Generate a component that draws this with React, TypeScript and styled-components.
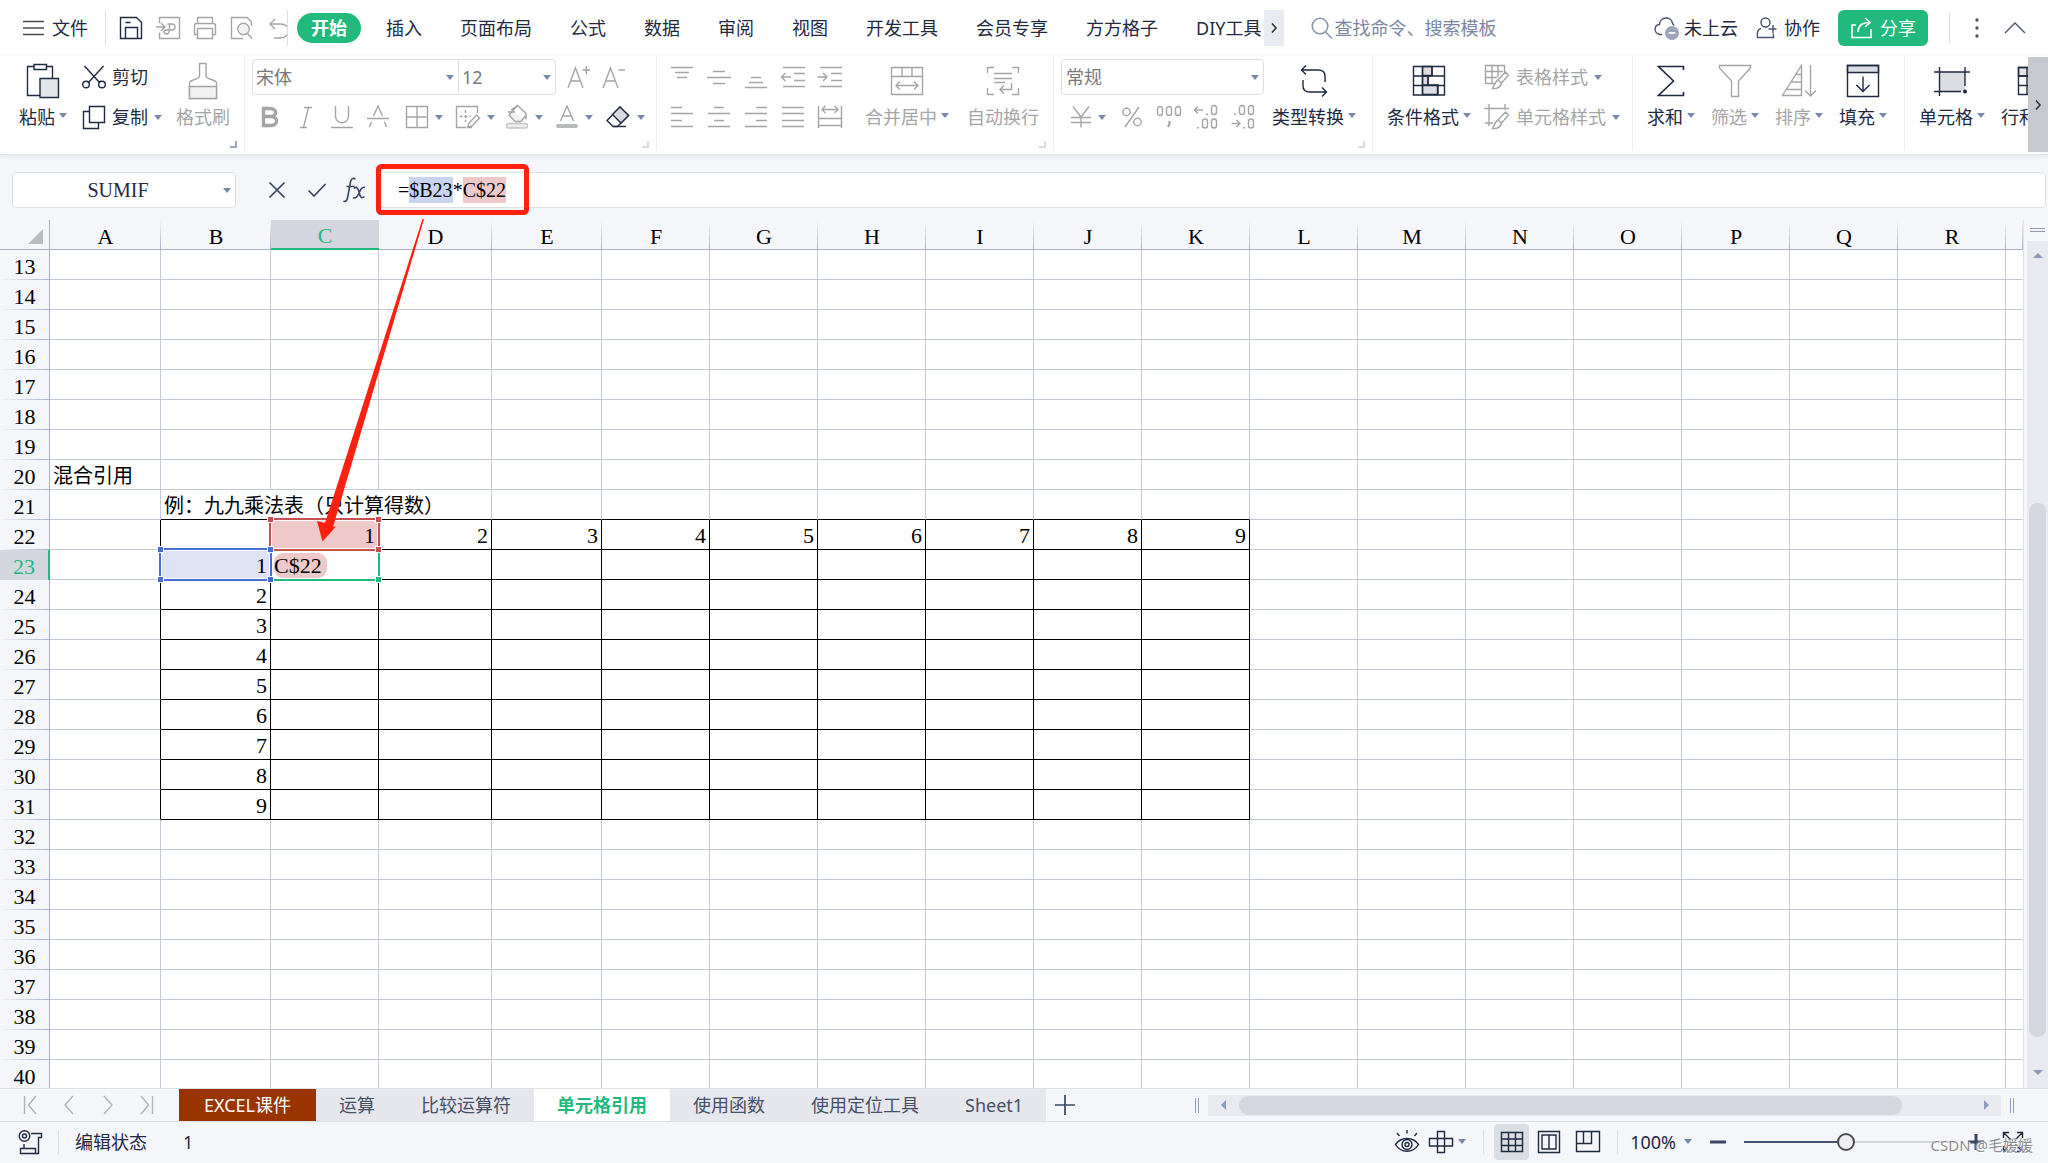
import React from "react";
import styled, { createGlobalStyle, css } from "styled-components";

const c = {
  ink: "#1f2940",
  dim: "#a5a5a7",
  caret: "#7888a8",
  line: "#dcdfe4",
  green: "#21ba7c",
  grid: "#c4c9da",
  head: "#a9b1c8",
  bg: "#f5f6f9",
  strip: "#e6e7ed",
  red: "#ff2010",
};

const ui = `"Noto Sans", "Noto Sans CJK SC", sans-serif`;
const song = `"Liberation Serif", "Noto Sans CJK SC", serif`;

const GlobalStyle = createGlobalStyle`
  * { box-sizing: border-box; }
  body { margin: 0; background: ${c.bg}; }
  button, input, select {
    font: inherit; color: inherit; margin: 0; padding: 0;
    border: 0; background: none; outline: none;
  }
  svg { display: block; flex: none; }
`;

/* ---------- icons ---------- */

const Svg = styled.svg<{ $dim?: boolean }>`
  fill: none;
  stroke: ${(p) => (p.$dim ? c.dim : c.ink)};
  stroke-width: 1.4;
`;

type IconDef = { w: number; h: number; d: React.ReactNode };

const icons: Record<string, IconDef> = {
  menu: { w: 22, h: 22, d: <path d="M1 4.500H22M1 11H22M1 17.500H22" stroke="#4a4a50" /> },
  save: { w: 24, h: 24, d: <path d="M1.500 1.500H17.500L22.500 6.500V22.500H1.500ZM6.500 22V11.500H18.500V22M6.500 6.500H11.500" /> },
  exportPdf: { w: 26, h: 24, d: <path d="M4.500 7V1.500H24.500V22.500H4.500V16.500M1 11H9.500M6 7L10 11L6 15M12.500 8H17C21 8 21 14 17 14H11.500C7.500 14 8.500 18.500 12 18C14.500 17.500 14.500 15 14.500 8" /> },
  print: { w: 24, h: 24, d: <><path d="M4.500 7.500V1.500H19.500V7.500M4.500 18.500H1.500V9.500C1.500 8 2.500 7.500 4 7.500H20C21.500 7.500 22.500 8 22.500 9.500V18.500H19.500" /><path d="M4.500 12.500H19.500V22.500H4.500Z" fill="#fff" /></> },
  preview: { w: 24, h: 24, d: <><path d="M13 22.500H1.500V1.500H17L21.500 6V10" /><circle cx="13.500" cy="13" r="5.800" fill="#f1f1f2" /><path d="M17.500 17.500L22 22.500" /></> },
  undo: { w: 22, h: 24, d: <path d="M7 3L2 8L7 13M2.500 8H12C18 8 20.500 11 20.500 14.500C20.500 19 17 22 12 22H6" /> },
  search: { w: 24, h: 24, d: <g stroke="#8a94ad" strokeWidth="1.600"><circle cx="10" cy="10" r="7.800" /><path d="M15.500 16L22 22.500" /></g> },
  cloud: { w: 26, h: 26, d: <><path d="M8 19.500H6C-1 18 0 10 5.500 9.500C6 1 17.500 1 18.500 8.500L20 10.500" stroke="#45526d" /><circle cx="18" cy="18" r="7" fill="#9aa5bb" stroke="none" /><path d="M14.500 18H21.500" stroke="#fff" strokeWidth="1.600" /></> },
  people: { w: 24, h: 24, d: <g stroke="#45526d"><circle cx="9.500" cy="6.500" r="4.500" /><path d="M5 12.500C1 13 1 17 1.500 21.500H17.500C17.700 19.500 17.500 18.500 17 17.500M12.500 13H20.500M17 9V17" /></g> },
  share: { w: 24, h: 24, d: <path d="M6 9H2V21.500H21V13M8 16C8 10 11 6.500 19.500 6.500M15 2L20 6.500L15 11" stroke="#fff" strokeWidth="1.600" /> },
  dots: { w: 6, h: 24, d: <g fill="#4a5568" stroke="none"><circle cx="3" cy="4" r="1.700" /><circle cx="3" cy="12" r="1.700" /><circle cx="3" cy="20" r="1.700" /></g> },
  up: { w: 22, h: 14, d: <path d="M1 12L11 2L21 12" stroke="#4a5568" /> },
  next: { w: 8, h: 12, d: <path d="M2 1.500L6 6L2 10.500" stroke="#333" strokeWidth="1.600" /> },

  paste: { w: 34, h: 36, d: <><path d="M8 3.500H1.500V32.500H14M20.500 3.500H26.500V15.500" /><path d="M8 1.500H20.500V6.500H8Z" /><path d="M14 15.500H32.500V34.500H14Z" fill="#e3e4e8" /></> },
  cut: { w: 24, h: 24, d: <><path d="M2.500 1L17.500 17.500M21.500 1L6.500 17.500" /><circle cx="4" cy="19.500" r="3.300" /><circle cx="20" cy="19.500" r="3.300" /></> },
  copy: { w: 24, h: 26, d: <path d="M7.500 2.500H22.500V18.500H7.500ZM7 7.500H1.500V24.500H16.500V19" /> },
  painter: { w: 30, h: 38, d: <><path d="M11.500 1.500H18V14C18 18 28.500 17 28.500 21V36.500H1.500V21C1.500 17 11.500 18 11.500 14Z" /><path d="M1.500 24.500H28.500V36.500H1.500Z" fill="#f1f1f2" /></> },
  fontUp: { w: 24, h: 24, d: <path d="M1 23L8.500 3L16 23M4 16H13M15.500 5H23M19.300 1V9" /> },
  fontDown: { w: 24, h: 24, d: <path d="M1 23L8.500 3L16 23M4 16H13M16.500 5H23" /> },
  bold: { w: 20, h: 22, d: <path d="M3.500 2.500H10C17.500 2.500 17.500 10.500 10 10.500H3.500ZM3.500 10.500H11C18.500 10.500 18.500 19.500 11 19.500H3.500Z" strokeWidth="3.400" /> },
  italic: { w: 14, h: 24, d: <path d="M5 2.500H13M1 22.500H8M9.500 2.500L4.500 22.500" /> },
  underline: { w: 24, h: 24, d: <path d="M5.500 1V11C5.500 20 18.500 20 18.500 11V1M1 22.500H23" /> },
  strike: { w: 24, h: 24, d: <path d="M7.500 11L12 1L16.500 11M1 13.500H23M5.500 17L3.500 22M18.500 17L20.500 22" /> },
  borders: { w: 24, h: 24, d: <path d="M1.500 1.500H22.500V22.500H1.500ZM12 1.500V22.500M1.500 12H22.500" /> },
  drawBorder: { w: 26, h: 24, d: <><path d="M11 22.500H1.500V1.500H22.500V8" /><path d="M10.500 5V17M4.500 11.500H16" strokeDasharray="3 2" /><path d="M12.500 22.500L14 18L21.500 10L24.500 13L17 21ZM12 22.500H17" /></> },
  fill: { w: 24, h: 26, d: <><path d="M6 6L12.500 1.500L21 9.500V15.500M3 8H10M12.500 1.500L4 11L10 17.500H16L21 11" fill="#f1f1f2" /><rect x="1.500" y="19.500" width="21" height="4.500" rx="2" fill="#ececee" stroke="#c5c5c7" /></> },
  fontColor: { w: 24, h: 24, d: <><path d="M5.500 16L12 1L18.500 16M7.500 11H16.500" /><rect x="1" y="19" width="22" height="4" rx="2" fill="#b7bab9" stroke="none" /></> },
  eraser: { w: 26, h: 24, d: <><path d="M15 2L23.500 10.500L12.500 21.500H8L2 15.500Z" /><path d="M15 2L23.500 10.500L16 18L7.500 9.500Z" fill="#d9dade" /><path d="M8 21.500H21" /></> },

  top: { w: 24, h: 24, d: <path d="M1 2.500H23M5 7.500H19M7 12.500H17" /> },
  middle: { w: 24, h: 24, d: <path d="M6 6.500H18M0 12.500H24M6 18.500H18" /> },
  bottom: { w: 24, h: 24, d: <path d="M7 12.500H17M5 17.500H19M1 22.500H23" /> },
  outdent: { w: 26, h: 24, d: <path d="M3 2.500H25M14 8.500H25M14 15.500H25M3 21.500H25M1.500 12H11M5.500 8L1.500 12L5.500 16" /> },
  indent: { w: 26, h: 24, d: <path d="M3 2.500H25M14 8.500H25M14 15.500H25M3 21.500H25M0.500 12H10M6 8L10 12L6 16" /> },
  left: { w: 24, h: 24, d: <path d="M1 2.500H12M1 8.500H23M1 15.500H12M1 21.500H23" /> },
  center: { w: 24, h: 24, d: <path d="M7 2.500H17M1 8.500H23M7 15.500H17M1 21.500H23" /> },
  right: { w: 24, h: 24, d: <path d="M12 2.500H23M1 8.500H23M12 15.500H23M1 21.500H23" /> },
  justify: { w: 24, h: 24, d: <path d="M1 2.500H23M1 8.500H23M1 15.500H23M1 21.500H23" /> },
  distribute: { w: 26, h: 24, d: <path d="M1.500 1V23M24.500 1V23M2 13.500H24M2 20.500H24M5 4.500H21M8.500 1L5 4.500L8.500 8M17.500 1L21 4.500L17.500 8" /> },
  merge: { w: 34, h: 30, d: <path d="M1.500 1.500H32.500V28.500H1.500ZM1.500 10.500H32.500M12 1.500V10.500M22 1.500V10.500M6 19.500H28M10 15.500L6 19.500L10 23.500M24 15.500L28 19.500L24 23.500" /> },
  wrap: { w: 34, h: 30, d: <path d="M8 1.500H1.500V7M26 1.500H32.500V7M8 28.500H1.500V22M26 28.500H32.500V22M8 7.500H26M8 12.500H26M8 16.500H19M25.500 17V23.500H14M18 19.500L14 23.500L18 27.500" /> },
  yen: { w: 22, h: 24, d: <path d="M3 1.500L11 12L19 1.500M11 12V22.500M1 12.500H21M1 17.500H21" /> },
  percent: { w: 22, h: 24, d: <><circle cx="5.500" cy="7" r="3.700" /><circle cx="16.500" cy="17" r="3.700" /><path d="M18 2L4 22" /></> },
  thousand: { w: 26, h: 24, d: <><rect x="1.500" y="1.500" width="5" height="9" rx="2.500" /><rect x="10.500" y="1.500" width="5" height="9" rx="2.500" /><rect x="19.500" y="1.500" width="5" height="9" rx="2.500" /><path d="M13.500 16V19L12 22" strokeWidth="2.200" /></> },
  decMore: { w: 26, h: 26, d: <><path d="M1.500 6H10M5 2.500L1.500 6L5 9.500" /><rect x="18.500" y="1.500" width="5" height="9" rx="2.500" /><rect x="9.500" y="15" width="5" height="9" rx="2.500" /><rect x="18.500" y="15" width="5" height="9" rx="2.500" /><path d="M14 9.500V11M5 23V24.500" strokeWidth="2" /></> },
  decLess: { w: 26, h: 26, d: <><path d="M1.500 19.500H10M6.500 16L10 19.500L6.500 23" /><rect x="9.500" y="1.500" width="5" height="9" rx="2.500" /><rect x="18.500" y="1.500" width="5" height="9" rx="2.500" /><rect x="18.500" y="15" width="5" height="9" rx="2.500" /><path d="M5 9.500V11M14 23V24.500" strokeWidth="2" /></> },
  convert: { w: 30, h: 34, d: <path d="M7 1.500L2.500 6L7 10.500M2.500 6H19C23.500 6 26 8 26 12V18M4 16V22C4 26 6.500 28 11 28H27.500M23 23.500L27.500 28L23 32.500" /> },
  condFormat: { w: 34, h: 32, d: <><path d="M10.500 1.500H20V10.500H10.500ZM10.500 11H16V20H10.500ZM10.500 20H26V29.500H10.500Z" fill="#dcdde2" /><path d="M1.500 1.500H32.500V30H1.500ZM1.500 11H32.500M1.500 20.500H32.500M10.500 1.500V30M20 1.500V11M16 11V20.500M25.500 20.500V30" /></> },
  tableStyle: { w: 26, h: 26, d: <path d="M10 19.500H1.500V1.500H20.500V9M1.500 7.500H19M1.500 13.500H13M8 1.500V19.500M14 1.500V13M14 16L21.500 8L24.500 11L17.500 19M14 16L17.500 19C16.500 23 13.500 25 8.500 24.500C10.500 22 10.500 17.500 14 16" /> },
  cellStyle: { w: 26, h: 26, d: <path d="M5 0V22M0 4.500H25M21 0V6M1 19H9M14 16L21.500 8L24.500 11L17.500 19M14 16L17.500 19C16.500 23 13.500 25 8.500 24.500C10.500 22 10.500 17.500 14 16" /> },
  sum: { w: 28, h: 32, d: <path d="M26.500 5V1.500H1.500L16.500 16L1.500 30.500H26.500V27" strokeWidth="1.600" /> },
  filter: { w: 34, h: 34, d: <path d="M1.500 1.500H32.500V4L20.500 17V32.500H13.500V17L1.500 4Z" /> },
  sort: { w: 36, h: 34, d: <path d="M20.500 1.500V31.500H1.500ZM15.500 10.500H20M10.500 18H20M6 25.500H20M29.500 1V31.500M24 26.500L29.500 32L35 26.500" /> },
  fillDown: { w: 34, h: 34, d: <><path d="M1.500 1.500H32.500V8.500H1.500Z" fill="#dcdde2" /><path d="M1.500 1.500H32.500V32.500H1.500ZM17 12.500V27M10.500 21L17 27.500L23.500 21" /></> },
  cells: { w: 36, h: 30, d: <><path d="M5.500 6H31V25H5.500Z" fill="#dcdde2" stroke="none" /><path d="M5.500 1V30M31 1V20M0 6H36M0 25.500H27" /><circle cx="31" cy="25.500" r="2" fill={c.ink} stroke="none" /></> },
  rows: { w: 34, h: 30, d: <><path d="M1.500 1.500H32.500V10H1.500Z" fill="#e3e4e8" /><path d="M1.500 1.500H32.500V28.500H1.500ZM1.500 10H32.500M1.500 19.500H32.500M10 1.500V28.500" /></> },

  cancel: { w: 18, h: 18, d: <path d="M1.500 1.500L16.500 16.500M16.500 1.500L1.500 16.500" stroke="#3a4763" strokeWidth="1.700" /> },
  accept: { w: 20, h: 16, d: <path d="M1.500 8.500L7 14L18.500 2" stroke="#3a4763" strokeWidth="1.700" /> },
  fx: { w: 24, h: 26, d: <path d="M12.500 2C9.500 0.500 8 2 7.500 5L4.500 21C4 24 2.500 25 0.500 24M3.500 9.500H11.500M11 11.500C13.500 9 15 11 16 15C17 20 18.500 22 21.500 19.500M22 10.500C19 9 17 14 16 16C14.500 19.500 12.500 22 10 20.500" stroke="#3a4763" strokeWidth="1.600" /> },
  first: { w: 14, h: 20, d: <path d="M1.500 1V19M13 1L5.500 10L13 19" stroke="#b0b2b8" /> },
  prev: { w: 12, h: 20, d: <path d="M10 1L2 10L10 19" stroke="#b0b2b8" /> },
  fwd: { w: 12, h: 20, d: <path d="M2 1L10 10L2 19" stroke="#b0b2b8" /> },
  last: { w: 14, h: 20, d: <path d="M12.500 1V19M1 1L8.500 10L1 19" stroke="#b0b2b8" /> },
  add: { w: 20, h: 20, d: <path d="M10 0V20M0 10H20" stroke="#3a4763" strokeWidth="1.700" /> },
  script: { w: 26, h: 26, d: <><circle cx="7.500" cy="7" r="5.300" /><circle cx="7.500" cy="7" r="2" /><path d="M14 4.500H24.500V8.500H21.500V24.500H18.500M7 15V19.500M3.500 19.500H18.500V24.500H3.500Z" /></> },
  eye: { w: 26, h: 26, d: <><path d="M1.500 15.500C7 7.500 19 7.500 24.500 15.500C19 24.500 7 24.500 1.500 15.500ZM13 1V4.500M3 4L5.500 7M23 4L20.500 7" /><circle cx="13" cy="15.500" r="5" /><circle cx="13" cy="15.500" r="2" /></> },
  cross: { w: 26, h: 24, d: <path d="M9.500 1.500H16.500V22.500H9.500ZM1.500 8.500H24.500V16H1.500Z" /> },
  viewGrid: { w: 24, h: 22, d: <path d="M1.500 1.500H22.500V20.500H1.500ZM1.500 8H22.500M1.500 14.500H22.500M8.500 1.500V20.500M15.500 1.500V20.500" /> },
  viewPage: { w: 24, h: 24, d: <path d="M1.500 1.500H22.500V22.500H1.500ZM5 5H19V19H5ZM12 5V19" /> },
  viewBreak: { w: 26, h: 24, d: <path d="M1.500 1.500H24.500V21.500H1.500ZM8.500 1.500V13.500H16.500V1.500M1.500 13.500H8.500M16.500 1.500V13.500" /> },
  minus: { w: 16, h: 4, d: <path d="M0 2H16" stroke="#3a4763" strokeWidth="3" /> },
  plus: { w: 16, h: 16, d: <path d="M0 8H16M8 0V16" stroke="#3a4763" strokeWidth="3" /> },
  expand: { w: 22, h: 22, d: <path d="M1.500 7V1.500H7M15 1.500H20.500V7M20.500 15V20.500H15M7 20.500H1.500V15M2 2L8.500 8.500M20 2L13.500 8.500M20 20L13.500 13.500M2 20L8.500 13.500" /> },
};

const Icon = ({ name, dim }: { name: string; dim?: boolean }) => {
  const i = icons[name];
  return (
    <Svg $dim={dim} width={i.w} height={i.h} viewBox={`0 0 ${i.w} ${i.h}`} aria-hidden="true">
      {i.d}
    </Svg>
  );
};

const Caret = styled.i`
  width: 0;
  height: 0;
  flex: none;
  border: 4px solid transparent;
  border-top: 5px solid ${c.caret};
  border-bottom: 0;
`;

/* ---------- shell ---------- */

const Shell = styled.div`
  display: flex;
  flex-direction: column;
  height: 100vh;
  overflow: hidden;
  background: ${c.bg};
  color: ${c.ink};
  font: 18px/26px ${ui};
  white-space: nowrap;
`;

const MenuBar = styled.header`
  display: flex;
  align-items: center;
  height: 56px;
  flex: none;
  padding: 0 22px;
  background: #fff;
`;

const Rule = styled.span<{ $h: number }>`
  width: 1px;
  height: ${(p) => p.$h}px;
  background: ${c.line};
`;

const TextButton = styled.button<{ $gap?: number }>`
  display: flex;
  align-items: center;
  gap: ${(p) => p.$gap ?? 8}px;
`;

const FileButton = styled(TextButton)`
  width: 83px;
`;

const QuickAccess = styled.div`
  display: flex;
  width: 182px;
  height: 36px;
  padding-left: 6px;
  margin-right: 9px;
  overflow: hidden;
  border-right: 1px solid ${c.line};
`;

const Slot = styled.button<{ $w?: number }>`
  display: flex;
  align-items: center;
  justify-content: center;
  flex: none;
  width: ${(p) => p.$w ?? 37}px;
`;

const Tabs = styled.nav`
  display: flex;
  align-items: center;
`;

const Tab = styled.button<{ $active?: boolean }>`
  padding: 0 19px;
  ${(p) =>
    p.$active &&
    css`
      padding: 0 14px;
      height: 30px;
      margin-right: 6px;
      border-radius: 15px;
      background: ${c.green};
      color: #fff;
      font-weight: 700;
    `}
  &:last-of-type { padding-right: 3px; }
`;

const MoreTabs = styled.button`
  display: flex;
  align-items: center;
  justify-content: center;
  width: 20px;
  height: 36px;
  background: #e8eaef;
`;

const Search = styled.label`
  display: flex;
  align-items: center;
  margin-left: 26px;
  input { width: 180px; }
  input::placeholder { color: #7b86a0; opacity: 1; }
`;

const Account = styled.div`
  display: flex;
  align-items: center;
  gap: 18px;
  margin-left: auto;
`;

const ShareButton = styled(TextButton)`
  height: 36px;
  padding: 0 12px;
  border-radius: 6px;
  background: ${c.green};
  color: #fff;
`;

const AccountEnd = styled.div`
  display: flex;
  align-items: center;
  gap: 24px;
  padding-left: 3px;
`;

/* ---------- ribbon ---------- */

const Ribbon = styled.section`
  display: flex;
  flex: none;
  height: 99px;
  background: #fff;
  border-bottom: 1px solid #e3e5e8;
  box-shadow: 0 1px 4px #e2e4e8;
`;

const RibbonView = styled.div`
  display: flex;
  flex: 1;
  min-width: 0;
  overflow: hidden;
`;

const RibbonNext = styled.button`
  display: flex;
  align-items: center;
  justify-content: center;
  width: 20px;
  height: 95px;
  margin-top: 1px;
  background: #c8c9cf;
`;

const Group = styled.div<{ $left: number; $w: number }>`
  position: relative;
  display: flex;
  flex: none;
  height: 95px;
  width: ${(p) => p.$w}px;
  padding-left: ${(p) => p.$left}px;
  border-right: 1px solid #eceef1;
`;

const Launcher = styled.button<{ $faint?: boolean }>`
  position: absolute;
  right: 7px;
  bottom: 3px;
  width: 7px;
  height: 7px;
  border-right: 2px solid ${(p) => (p.$faint ? "#d5dbe8" : "#9aa8c2")};
  border-bottom: 2px solid ${(p) => (p.$faint ? "#d5dbe8" : "#9aa8c2")};
`;

const Big = styled.button<{ $w: number; $dim?: boolean }>`
  display: flex;
  flex-direction: column;
  align-items: center;
  flex: none;
  width: ${(p) => p.$w}px;
  height: 75px;
  padding-top: 5px;
  color: ${(p) => (p.$dim ? c.dim : c.ink)};
`;

const BigIcon = styled.span`
  display: flex;
  align-items: center;
  height: 40px;
`;

const BigLabel = styled.span`
  display: flex;
  align-items: center;
  gap: 4px;
  margin-top: 3px;
  ${Caret} { margin-bottom: 4px; }
`;

const BigButton = (p: { icon: string; label: string; w: number; dim?: boolean; menu?: boolean }) => (
  <Big $w={p.w} $dim={p.dim}>
    <BigIcon><Icon name={p.icon} dim={p.dim} /></BigIcon>
    <BigLabel>{p.label}{p.menu && <Caret />}</BigLabel>
  </Big>
);

const Stack = styled.div<{ $left?: number; $right?: number }>`
  display: flex;
  flex-direction: column;
  gap: 4px;
  padding-top: 3px;
  margin-left: ${(p) => p.$left ?? 0}px;
  margin-right: ${(p) => p.$right ?? 0}px;
`;

const Line = styled.div`
  display: flex;
  align-items: stretch;
  height: 36px;
`;

const SmallButton = styled.button<{ $dim?: boolean }>`
  display: flex;
  align-items: center;
  gap: 6px;
  height: 36px;
  color: ${(p) => (p.$dim ? c.dim : c.ink)};
`;

const Split = styled.button<{ $w?: number }>`
  display: flex;
  align-items: center;
  gap: 6px;
  flex: none;
  width: ${(p) => p.$w ?? 50}px;
  padding-left: 9px;
`;

const Combo = styled.span<{ $w: number; $join?: "left" | "right"; $pad?: number }>`
  display: grid;
  align-items: center;
  width: ${(p) => p.$w}px;
  border: 1px solid ${c.line};
  border-radius: ${(p) => (p.$join === "left" ? "4px 0 0 4px" : p.$join === "right" ? "0 4px 4px 0" : "4px")};
  border-left-width: ${(p) => (p.$join === "right" ? 0 : 1)}px;
  background: #fff;
  select, ${Caret} { grid-area: 1 / 1; }
  select { appearance: none; height: 34px; padding-left: ${(p) => p.$pad ?? 3}px; color: #77797d; }
  ${Caret} { justify-self: end; margin-right: 4px; pointer-events: none; }
`;

const Select = (p: { label: string; value: string; w: number; join?: "left" | "right"; pad?: number }) => (
  <Combo $w={p.w} $join={p.join} $pad={p.pad}>
    <select aria-label={p.label} defaultValue={p.value}><option>{p.value}</option></select>
    <Caret />
  </Combo>
);

/* ---------- formula bar ---------- */

const FormulaBar = styled.section`
  display: flex;
  align-items: center;
  flex: none;
  height: 65px;
  padding: 5px 2px 0 12px;
`;

const fieldBox = css`
  height: 36px;
  border: 1px solid ${c.line};
  border-radius: 4px;
  background: #fff;
`;

const NameBox = styled.div`
  ${fieldBox}
  display: flex;
  align-items: center;
  width: 224px;
  padding-right: 4px;
  margin-right: 21px;
  input { flex: 1; min-width: 0; text-align: center; font: 20px/26px ${song}; }
`;

const Formula = styled.div`
  ${fieldBox}
  flex: 1;
  padding: 4px 18px;
  margin-left: 6px;
  color: #000;
  font: 20px/26px ${song};
`;

const Ref = styled.mark<{ $tone: string }>`
  display: inline-block;
  height: 26px;
  background: ${(p) => p.$tone};
`;

/* ---------- sheet ---------- */

const Main = styled.main`
  display: flex;
  flex: 1;
  min-height: 0;
`;

const SheetView = styled.div`
  flex: 1;
  min-width: 0;
  overflow: hidden;
  background: #fff;
  border-right: 1px solid #e1e3e8;
`;

const Grid = styled.table`
  width: 100%;
  table-layout: fixed;
  border-collapse: separate;
  border-spacing: 0;
  color: #000;
  font: 22px/26px ${song};
  th, td { padding: 0; height: 30px; }
`;

const Corner = styled.th`
  background: ${c.bg};
  border-right: 1px solid ${c.head};
  border-bottom: 1px solid ${c.head};
  svg { margin: 3px 6px 0 auto; }
`;

const ColHead = styled.th<{ $on?: boolean }>`
  font-weight: 400;
  color: ${(p) => (p.$on ? c.green : "#000")};
  border-bottom: ${(p) => (p.$on ? `2px solid ${c.green}` : `1px solid ${c.head}`)};
  background: ${(p) =>
    p.$on
      ? "#d3d6de"
      : `linear-gradient(to bottom, transparent, ${c.head}) right / 1px 100% no-repeat ${c.bg}`};
  span { display: block; height: 28px; padding-top: 3px; }
`;

const RowHead = styled.th<{ $on?: boolean }>`
  font-weight: 400;
  color: ${(p) => (p.$on ? c.green : "#000")};
  border-right: ${(p) => (p.$on ? `2px solid ${c.green}` : `1px solid ${c.head}`)};
  background: ${(p) =>
    p.$on ? "#d3d6de" : `linear-gradient(to right, transparent, ${c.head}) bottom / 100% 1px no-repeat ${c.bg}`};
  span { display: block; height: 29px; padding-top: 3px; }
`;

const Cell = styled.td<{ $r: string; $b: string }>`
  position: relative;
  border-right: 1px solid ${(p) => p.$r};
  border-bottom: 1px solid ${(p) => p.$b};
`;

const CellText = styled.div<{ $align?: "right"; $cjk?: boolean }>`
  position: relative;
  height: 29px;
  padding: 3px 3px 0;
  text-align: ${(p) => p.$align ?? "left"};
  font-size: ${(p) => (p.$cjk ? 20 : 22)}px;
`;

const Outline = styled.span<{ $color: string; $fill: string }>`
  position: absolute;
  inset: -2px;
  border: 2px solid ${(p) => p.$color};
  box-shadow: inset 0 0 0 1px #fff;
  background: ${(p) => p.$fill};
`;

const Handle = styled.span<{ $color: string; $x: "left" | "right"; $y: "top" | "bottom" }>`
  position: absolute;
  z-index: 1;
  ${(p) => p.$x}: -4px;
  ${(p) => p.$y}: -4px;
  width: 7px;
  height: 7px;
  border: 1px solid #fff;
  background: ${(p) => p.$color};
`;

const ActiveEdge = styled.span`
  position: absolute;
  inset: 0 -2px -2px 0;
  border: solid ${c.green};
  border-width: 0 2px 2px 0;
`;

const Editing = styled.span`
  display: inline-block;
  height: 25px;
  padding-right: 5px;
  border-radius: 9px;
  background: #edc9ca;
  line-height: 25px;
`;

const corners = [["left", "top"], ["right", "top"], ["left", "bottom"], ["right", "bottom"]] as const;

const RefFrame = ({ color, fill }: { color: string; fill: string }) => (
  <>
    <Outline $color={color} $fill={fill} />
    {corners.map(([x, y]) => <Handle key={x + y} $color={color} $x={x} $y={y} />)}
  </>
);

const columns: [string, number][] = [
  ["A", 111], ["B", 110], ["C", 108], ["D", 113], ["E", 110],
  ..."FGHIJKLMNOPQR".split("").map((n): [string, number] => [n, 108]),
];
const names = [...columns.map(([n]) => n), ""];
const rows = Array.from({ length: 28 }, (_, i) => i + 13);
const BLACK = "#000";

const cellContent = (row: number, col: number) => {
  if (row === 20 && col === 0) return <CellText $cjk>混合引用</CellText>;
  if (row === 21 && col === 1) return <CellText $cjk>例：九九乘法表（只计算得数）</CellText>;
  if (row === 22 && col >= 2 && col <= 10)
    return (
      <>
        {col === 2 && <RefFrame color="#c5504f" fill="#edc9ca" />}
        <CellText $align="right">{col - 1}</CellText>
      </>
    );
  if (row === 23 && col === 2)
    return (
      <>
        <ActiveEdge />
        <Handle $color={c.green} $x="right" $y="bottom" />
        <CellText><Editing>C$22</Editing></CellText>
      </>
    );
  if (row >= 23 && row <= 31 && col === 1)
    return (
      <>
        {row === 23 && <RefFrame color="#466fd1" fill="#dde3f5" />}
        <CellText $align="right">{row - 22}</CellText>
      </>
    );
  return null;
};

const rightEdge = (row: number, col: number) => {
  if (row >= 22 && row <= 31 && col <= 10) return BLACK;
  if (row === 21 && (col === 1 || col === 2)) return "transparent";
  return c.grid;
};

const bottomEdge = (row: number, col: number) =>
  row >= 21 && row <= 31 && col >= 1 && col <= 10 ? BLACK : c.grid;

const Sheet = () => (
  <Grid>
    <colgroup>
      <col width={50} />
      {columns.map(([n, w]) => <col key={n} width={w} />)}
      <col />
    </colgroup>
    <thead>
      <tr>
        <Corner>
          <svg width="15" height="15" viewBox="0 0 15 15"><path d="M15 0V15H0Z" fill="#b9bbc0" /></svg>
        </Corner>
        {names.map((n) => <ColHead key={n} scope="col" $on={n === "C"}><span>{n}</span></ColHead>)}
      </tr>
    </thead>
    <tbody>
      {rows.map((r) => (
        <tr key={r}>
          <RowHead scope="row" $on={r === 23}><span>{r}</span></RowHead>
          {names.map((n, i) => (
            <Cell key={n} $r={i === names.length - 1 ? "transparent" : rightEdge(r, i)} $b={bottomEdge(r, i)}>
              {cellContent(r, i)}
            </Cell>
          ))}
        </tr>
      ))}
    </tbody>
  </Grid>
);

const VScroll = styled.div`
  display: flex;
  flex-direction: column;
  align-items: center;
  width: 24px;
  padding: 8px 0 0 3px;
`;

const SplitGrip = styled.span<{ $v?: boolean }>`
  flex: none;
  width: ${(p) => (p.$v ? 4 : 15)}px;
  height: ${(p) => (p.$v ? 15 : 4)}px;
  border: solid #8f9bb3;
  border-width: ${(p) => (p.$v ? "0 1px" : "1px 0")};
`;

const VTrack = styled.div`
  display: grid;
  grid-template-rows: 28px 234fr 533fr 20fr 31px;
  flex: 1;
  width: 21px;
  margin-top: 9px;
  background: #e9eaef;
`;

const Arrow = styled.button<{ $dir: "up" | "down" | "left" | "right" }>`
  display: flex;
  align-items: center;
  justify-content: center;
  &::before {
    content: "";
    border: 5px solid transparent;
    border-${(p) => ({ up: "bottom", down: "top", left: "right", right: "left" })[p.$dir]}-color: #8c9ab8;
    border-${(p) => ({ up: "top", down: "bottom", left: "left", right: "right" })[p.$dir]}-width: 0;
  }
`;

const VThumb = styled.span`
  margin: 0 2px;
  border-radius: 8px;
  background: #d5d7e0;
`;

/* ---------- sheet tabs ---------- */

const SheetBar = styled.section`
  display: flex;
  align-items: center;
  flex: none;
  height: 34px;
  border-top: 1px solid ${c.line};
  border-bottom: 1px solid ${c.line};
`;

const SheetNav = styled.div`
  display: flex;
  width: 179px;
  padding-left: 10px;
`;

const SheetTab = styled.button<{ $kind?: "active" | "brown" }>`
  height: 32px;
  padding: 0 23px;
  background: ${c.strip};
  color: #454f66;
  ${(p) => p.$kind === "active" && css`background: #fff; color: ${c.green}; font-weight: 700;`}
  ${(p) => p.$kind === "brown" && css`padding: 0 25px; background: #993300; color: #fff;`}
`;

const HScroll = styled.div`
  display: flex;
  align-items: center;
  gap: 9px;
  flex: 1;
  margin-left: 112px;
  padding-right: 34px;
`;

const HTrack = styled.div`
  display: grid;
  grid-template-columns: 31px 663fr 70fr 29px;
  flex: 1;
  height: 21px;
  background: #e9eaef;
`;

const HThumb = styled.span`
  margin: 1px 0;
  border-radius: 9px;
  background: #d5d7e0;
`;

/* ---------- status bar ---------- */

const StatusBar = styled.footer`
  display: flex;
  align-items: center;
  flex: none;
  height: 41px;
  padding: 0 10px 2px 17px;
`;

const Mode = styled.span`
  margin: 0 36px 0 16px;
`;

const ScriptButton = styled(Slot)`
  margin-right: 15px;
`;

const StatusRight = styled.div`
  display: flex;
  align-items: center;
  margin-left: auto;
`;

const ViewButton = styled.button<{ $on?: boolean }>`
  display: flex;
  align-items: center;
  justify-content: center;
  width: ${(p) => (p.$on ? 35 : 39)}px;
  height: 36px;
  border-radius: 4px;
  background: ${(p) => (p.$on ? "#d9dde4" : "none")};
`;

const ViewSet = styled.div`
  display: flex;
  padding: 0 10px;
`;

const Views = styled.div`
  display: flex;
  align-items: center;
  margin: 0 12px 0 17px;
`;

const Zoom = styled.input`
  appearance: none;
  width: 211px;
  height: 20px;
  margin: 0 9px 0 18px;
  background: linear-gradient(to right, #44546f 47%, #d5d7dc 47%) center / 100% 2px no-repeat;
  &::-webkit-slider-thumb {
    appearance: none;
    width: 18px;
    height: 18px;
    border: 2px solid #4d4d50;
    border-radius: 50%;
    background: #eeeef0;
  }
`;

const ZoomLevel = styled(TextButton)`
  margin-right: 18px;
`;

/* ---------- overlays ---------- */

const Annotation = styled.svg`
  position: absolute;
  left: 0;
  top: 0;
  pointer-events: none;
`;

const Watermark = styled.span`
  position: absolute;
  right: 15px;
  bottom: 8px;
  color: #8d8e92;
  font: 15px/20px ${ui};
  text-shadow: 1px 1px 0 #fff;
`;

const tabs = ["插入", "页面布局", "公式", "数据", "审阅", "视图", "开发工具", "会员专享", "方方格子", "DIY工具"];

export default function App() {
  return (
    <Shell>
      <GlobalStyle />
      <MenuBar>
        <FileButton><Icon name="menu" />文件</FileButton>
        <Rule $h={36} />
        <QuickAccess>
          <Slot aria-label="保存"><Icon name="save" /></Slot>
          <Slot aria-label="输出"><Icon name="exportPdf" dim /></Slot>
          <Slot aria-label="打印"><Icon name="print" dim /></Slot>
          <Slot aria-label="打印预览"><Icon name="preview" dim /></Slot>
          <Slot aria-label="撤销"><Icon name="undo" dim /></Slot>
        </QuickAccess>
        <Tabs>
          <Tab $active>开始</Tab>
          {tabs.map((t) => <Tab key={t}>{t}</Tab>)}
        </Tabs>
        <MoreTabs aria-label="更多"><Icon name="next" /></MoreTabs>
        <Search>
          <Icon name="search" />
          <input placeholder="查找命令、搜索模板" aria-label="查找命令" />
        </Search>
        <Account>
          <TextButton $gap={4}><Icon name="cloud" />未上云</TextButton>
          <TextButton $gap={4}><Icon name="people" />协作</TextButton>
          <ShareButton $gap={6}><Icon name="share" />分享</ShareButton>
          <AccountEnd>
            <Rule $h={30} />
            <TextButton aria-label="更多选项"><Icon name="dots" /></TextButton>
            <TextButton aria-label="收起"><Icon name="up" /></TextButton>
          </AccountEnd>
        </Account>
      </MenuBar>

      <Ribbon>
        <RibbonView>
          <Group $left={10} $w={245}>
            <BigButton icon="paste" label="粘贴" w={66} menu />
            <Stack $left={6}>
              <SmallButton><Icon name="cut" />剪切</SmallButton>
              <SmallButton><Icon name="copy" />复制<Caret /></SmallButton>
            </Stack>
            <BigButton icon="painter" label="格式刷" w={82} dim />
            <Launcher aria-label="剪贴板" />
          </Group>

          <Group $left={7} $w={412}>
            <Stack>
              <Line>
                <Select label="字体" value="宋体" w={207} join="left" />
                <Select label="字号" value="12" w={97} join="right" />
                <Slot $w={46} aria-label="增大字号"><Icon name="fontUp" dim /></Slot>
                <Slot $w={24} aria-label="减小字号"><Icon name="fontDown" dim /></Slot>
              </Line>
              <Line>
                <Slot $w={36} aria-label="加粗"><Icon name="bold" dim /></Slot>
                <Slot $w={36} aria-label="倾斜"><Icon name="italic" dim /></Slot>
                <Slot $w={36} aria-label="下划线"><Icon name="underline" dim /></Slot>
                <Slot $w={36} aria-label="删除线"><Icon name="strike" dim /></Slot>
                <Split aria-label="边框"><Icon name="borders" dim /><Caret /></Split>
                <Split aria-label="绘图边框"><Icon name="drawBorder" dim /><Caret /></Split>
                <Split aria-label="填充颜色"><Icon name="fill" dim /><Caret /></Split>
                <Split aria-label="字体颜色"><Icon name="fontColor" dim /><Caret /></Split>
                <Split aria-label="清除"><Icon name="eraser" /><Caret /></Split>
              </Line>
            </Stack>
            <Launcher $faint aria-label="字体设置" />
          </Group>

          <Group $left={6} $w={397}>
            <Stack $right={10}>
              <Line>
                {["top", "middle", "bottom", "outdent", "indent"].map((n) => (
                  <Slot key={n} aria-label={n}><Icon name={n} dim /></Slot>
                ))}
              </Line>
              <Line>
                {["left", "center", "right", "justify", "distribute"].map((n) => (
                  <Slot key={n} aria-label={n}><Icon name={n} dim /></Slot>
                ))}
              </Line>
            </Stack>
            <BigButton icon="merge" label="合并居中" w={98} dim menu />
            <BigButton icon="wrap" label="自动换行" w={94} dim />
            <Launcher $faint aria-label="对齐设置" />
          </Group>

          <Group $left={7} $w={319}>
            <Stack>
              <Line><Select label="数字格式" value="常规" w={203} pad={4} /></Line>
              <Line>
                <Split $w={52} aria-label="货币"><Icon name="yen" dim /><Caret /></Split>
                {["percent", "thousand", "decMore", "decLess"].map((n) => (
                  <Slot key={n} aria-label={n}><Icon name={n} dim /></Slot>
                ))}
              </Line>
            </Stack>
            <BigButton icon="convert" label="类型转换" w={100} menu />
            <Launcher $faint aria-label="数字设置" />
          </Group>

          <Group $left={6} $w={260}>
            <BigButton icon="condFormat" label="条件格式" w={100} menu />
            <Stack $left={5}>
              <SmallButton $dim><Icon name="tableStyle" dim />表格样式<Caret /></SmallButton>
              <SmallButton $dim><Icon name="cellStyle" dim />单元格样式<Caret /></SmallButton>
            </Stack>
          </Group>

          <Group $left={6} $w={272}>
            <BigButton icon="sum" label="求和" w={64} menu />
            <BigButton icon="filter" label="筛选" w={64} menu dim />
            <BigButton icon="sort" label="排序" w={64} menu dim />
            <BigButton icon="fillDown" label="填充" w={64} menu />
          </Group>

          <Group $left={7} $w={180}>
            <BigButton icon="cells" label="单元格" w={80} menu />
            <BigButton icon="rows" label="行和列" w={84} menu />
          </Group>
        </RibbonView>
        <RibbonNext aria-label="向右滚动"><Icon name="next" /></RibbonNext>
      </Ribbon>

      <FormulaBar>
        <NameBox>
          <input defaultValue="SUMIF" aria-label="名称框" />
          <Caret />
        </NameBox>
        <Slot $w={40} aria-label="取消"><Icon name="cancel" /></Slot>
        <Slot $w={40} aria-label="输入"><Icon name="accept" /></Slot>
        <Slot $w={36} aria-label="插入函数"><Icon name="fx" /></Slot>
        <Formula role="textbox" aria-label="编辑栏">
          =<Ref $tone="#c9d4f0">$B23</Ref>*<Ref $tone="#edc9ca">C$22</Ref>
        </Formula>
      </FormulaBar>

      <Main>
        <SheetView><Sheet /></SheetView>
        <VScroll>
          <SplitGrip />
          <VTrack>
            <Arrow $dir="up" aria-label="向上" />
            <span />
            <VThumb />
            <span />
            <Arrow $dir="down" aria-label="向下" />
          </VTrack>
        </VScroll>
      </Main>

      <SheetBar>
        <SheetNav>
          <Slot $w={39} aria-label="第一个"><Icon name="first" /></Slot>
          <Slot $w={39} aria-label="上一个"><Icon name="prev" /></Slot>
          <Slot $w={39} aria-label="下一个"><Icon name="fwd" /></Slot>
          <Slot $w={39} aria-label="最后一个"><Icon name="last" /></Slot>
        </SheetNav>
        <SheetTab $kind="brown">EXCEL课件</SheetTab>
        <SheetTab>运算</SheetTab>
        <SheetTab>比较运算符</SheetTab>
        <SheetTab $kind="active">单元格引用</SheetTab>
        <SheetTab>使用函数</SheetTab>
        <SheetTab>使用定位工具</SheetTab>
        <SheetTab>Sheet1</SheetTab>
        <Slot aria-label="新建工作表"><Icon name="add" /></Slot>
        <HScroll>
          <SplitGrip $v />
          <HTrack>
            <Arrow $dir="left" aria-label="向左" />
            <HThumb />
            <span />
            <Arrow $dir="right" aria-label="向右" />
          </HTrack>
          <SplitGrip $v />
        </HScroll>
      </SheetBar>

      <StatusBar>
        <ScriptButton $w={26} aria-label="宏"><Icon name="script" /></ScriptButton>
        <Rule $h={24} />
        <Mode>编辑状态</Mode>
        <span>1</span>
        <StatusRight>
          <Slot $w={42} aria-label="护眼"><Icon name="eye" /></Slot>
          <TextButton $gap={4} aria-label="阅读模式"><Icon name="cross" /><Caret /></TextButton>
          <Views>
            <Rule $h={24} />
            <ViewSet>
              <ViewButton $on aria-label="普通视图"><Icon name="viewGrid" /></ViewButton>
              <ViewButton aria-label="页面布局视图"><Icon name="viewPage" /></ViewButton>
              <ViewButton aria-label="分页预览"><Icon name="viewBreak" /></ViewButton>
            </ViewSet>
            <Rule $h={24} />
          </Views>
          <ZoomLevel>100%<Caret /></ZoomLevel>
          <TextButton aria-label="缩小"><Icon name="minus" /></TextButton>
          <Zoom type="range" min={0} max={100} defaultValue={48} aria-label="缩放" />
          <Slot $w={24} aria-label="放大"><Icon name="plus" /></Slot>
          <Slot $w={50} aria-label="全屏"><Icon name="expand" /></Slot>
        </StatusRight>
      </StatusBar>

      <Annotation width="560" height="560" viewBox="0 0 560 560" aria-hidden="true">
        <rect x="378.500" y="166.500" width="148" height="46" rx="3" fill="none" stroke={c.red} strokeWidth="5" />
        <path d="M422.500 219H424L333 527L336 526.500L322.500 541.500L317 521L325 523Z" fill={c.red} />
      </Annotation>
      <Watermark>CSDN @毛媛媛</Watermark>
    </Shell>
  );
}
